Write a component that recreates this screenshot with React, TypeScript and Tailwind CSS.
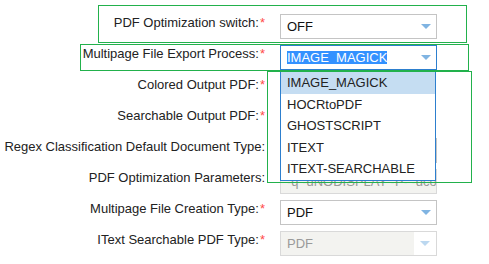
import React from 'react'

type Row = {
  label: string
  required?: boolean
  kind: 'select' | 'input' | 'disabledSelect'
  value: string
  width?: string
  focused?: boolean
}

// rows 3-5 sit under the open dropdown, so their values are never seen
const rows: Row[] = [
  { label: 'PDF Optimization switch:', required: true, kind: 'select', value: 'OFF' },
  { label: 'Multipage File Export Process:', required: true, kind: 'select', value: 'IMAGE_MAGICK', focused: true },
  { label: 'Colored Output PDF:', required: true, kind: 'select', value: '', width: 'w-[155px]' },
  { label: 'Searchable Output PDF:', required: true, kind: 'select', value: '', width: 'w-[155px]' },
  { label: 'Regex Classification Default Document Type:', kind: 'select', value: '' },
  { label: 'PDF Optimization Parameters:', kind: 'input', value: '-q -dNODISPLAY -P- -dcompress' },
  { label: 'Multipage File Creation Type:', required: true, kind: 'select', value: 'PDF' },
  { label: 'IText Searchable PDF Type:', required: true, kind: 'disabledSelect', value: 'PDF' },
]

const options = ['IMAGE_MAGICK', 'HOCRtoPDF', 'GHOSTSCRIPT', 'ITEXT', 'ITEXT-SEARCHABLE']

function Arrow({ light }: { light?: boolean }) {
  return (
    <svg width="10" height="5" viewBox="0 0 10 5">
      <polygon points="0,0 10,0 5,5" fill={light ? '#bcd8f0' : '#80b4e2'} />
    </svg>
  )
}

function Control({ row }: { row: Row }) {
  if (row.kind === 'input') {
    return (
      <div className="flex h-[25px] w-[157px] items-center overflow-hidden whitespace-nowrap border border-[#d9d9d9] bg-[#f3f3f0] pl-[6px] text-[#9a9a9a]">
        {row.value}
      </div>
    )
  }
  if (row.kind === 'disabledSelect') {
    return (
      <div className="flex h-[25px] w-[157px] border border-[#d9d9d9] bg-white">
        <div className="flex flex-1 items-center bg-[#f3f3f0] pl-[6px] text-[#9a9a9a]">{row.value}</div>
        <div className="flex w-[22px] items-center justify-center pr-[1px]">
          <Arrow light />
        </div>
      </div>
    )
  }
  return (
    <div
      className={`flex h-[25px] ${row.width ?? 'w-[157px]'} items-center justify-between border bg-white pl-[6px] pr-[5px] ${
        row.focused ? 'border-[#2d7fce]' : 'border-[#c4c4c4]'
      }`}
    >
      {row.focused ? (
        <span className="bg-[#3391ff] leading-[13px] text-white">{row.value}</span>
      ) : (
        <span className="text-[#111]">{row.value}</span>
      )}
      <Arrow />
    </div>
  )
}

export default function App() {
  return (
    <div className="relative h-[264px] w-[489px] overflow-hidden bg-white font-['Liberation_Sans',Arial,sans-serif] text-[13px]">
      <div className="pt-[11px]">
        {rows.map((row) => (
          <div key={row.label} className="flex h-[31px]">
            <div className="w-[265px] whitespace-nowrap pt-[4px] text-right leading-[15px] text-[#222]">
              {row.label}
              {row.required && <span className="ml-[1px] text-[#ff4a4a]">*</span>}
            </div>
            <div className="ml-[15px] pt-[3px]">
              <Control row={row} />
            </div>
          </div>
        ))}
      </div>

      {/* open dropdown */}
      <div className="absolute left-[280px] top-[71px] w-[156px] border border-[#2d7fce] bg-white">
        {options.map((o, i) => (
          <div
            key={o}
            className={`flex h-[21.6px] items-center pl-[6px] text-[#222] ${i === 0 ? 'bg-[#c5ddf2]' : ''}`}
          >
            {o}
          </div>
        ))}
      </div>

      {/* annotation boxes */}
      <div className="absolute left-[98px] top-[5px] h-[38px] w-[369px] border border-[#22b14c]" />
      <div className="absolute left-[80px] top-[44px] h-[27px] w-[389px] border border-[#22b14c]" />
      <div className="absolute left-[267px] top-[71px] h-[112px] w-[205px] border border-[#22b14c]" />
    </div>
  )
}
